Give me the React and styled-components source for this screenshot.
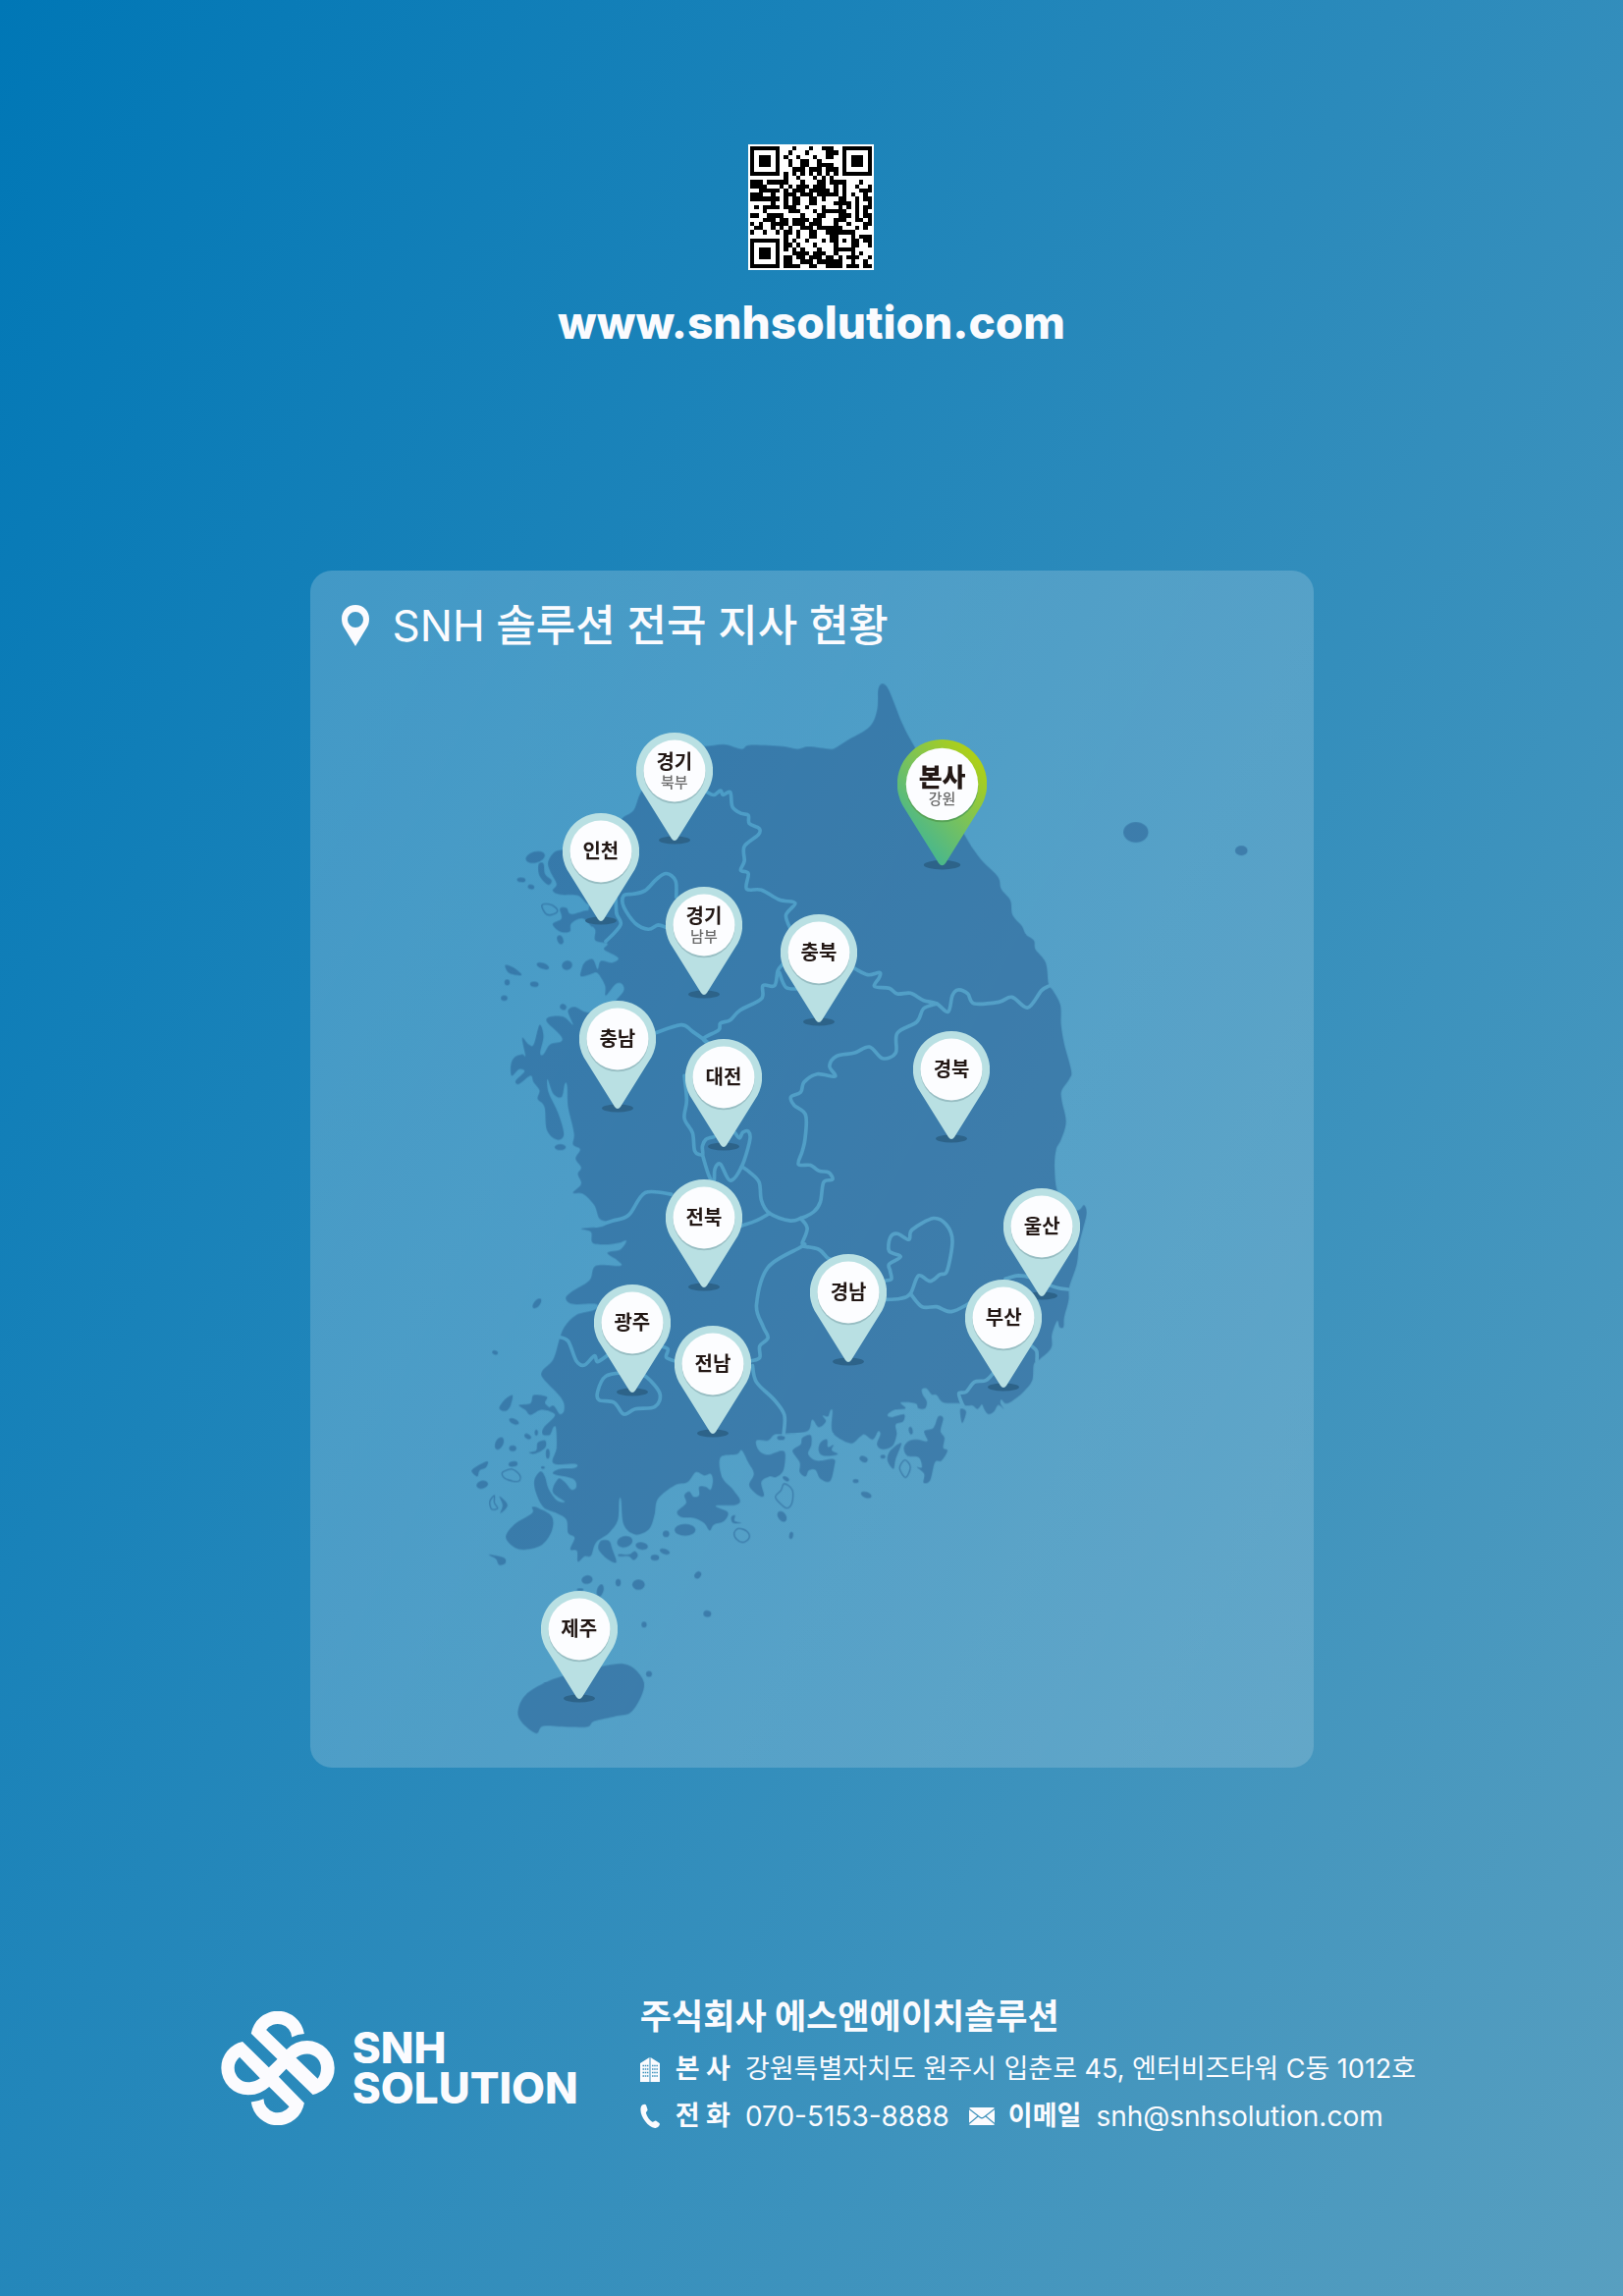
import React from "react";
import styled, { createGlobalStyle } from "styled-components";

const GlobalStyle = createGlobalStyle`
  *, *::before, *::after { box-sizing: border-box; }
  body { margin: 0; }
  h1, h2, p, ul, address { margin: 0; padding: 0; font-style: normal; }
  a { color: inherit; text-decoration: none; }
`;

/* ---------- page ---------- */

const Page = styled.div`
  min-height: 100vh;
  display: flex;
  flex-direction: column;
  align-items: center;
  padding: 147px 0 160px;
  color: #fbfbfe;
  font-family: Inter, "Noto Sans CJK KR", sans-serif;
  background: linear-gradient(117deg, #0077b6 0%, #2b8abb 50%, #589fc0 100%);
`;

const SiteLink = styled.a`
  display: flex;
  flex-direction: column;
  align-items: center;
  gap: 23px;
  font-size: 46px;
  line-height: 60px;
  font-weight: 800;
`;

const QrFrame = styled.svg`
  display: block;
  width: 128px;
  height: 128px;
  background: #fff;
`;

const Panel = styled.section`
  width: 1022px;
  max-width: 100%;
  margin-top: 223px;
  border-radius: 22px;
  background: linear-gradient(117deg, rgba(255, 255, 255, 0.2), rgba(255, 255, 255, 0.16));
`;

const PanelHeader = styled.header`
  display: flex;
  align-items: center;
  gap: 24px;
  height: 99px;
  padding: 13px 32px 0;
`;

const PanelTitle = styled.h2`
  font-size: 44px;
  line-height: 60px;
  font-weight: 500;
`;

const Latin = styled.span`
  font-weight: 400;
`;

const MapCanvas = styled.div`
  position: relative;
  aspect-ratio: 1021 / 1119;
`;

const MapDrawing = styled.svg`
  display: block;
  width: 100%;
  height: 100%;
`;

const PinList = styled.ul`
  list-style: none;
`;

const Pin = styled.li`
  position: absolute;
  left: ${(p) => (p.$x / 1021) * 100}%;
  top: ${(p) => (p.$y / 1119) * 100}%;
  width: ${(p) => (p.$main ? 91 : 78)}px;
  height: ${(p) => (p.$main ? 133 : 114)}px;
  margin-left: ${(p) => (p.$main ? -45 : -39)}px;
  margin-top: ${(p) => (p.$main ? -46 : -39)}px;
  font-family: "Noto Sans CJK KR", sans-serif;
`;

const PinShape = styled.svg`
  display: block;
  width: 100%;
  height: 100%;
`;

const PinLabel = styled.div`
  position: absolute;
  inset: 0 0 auto;
  height: ${(p) => (p.$main ? 91 : 76)}px;
  display: flex;
  flex-direction: column;
  align-items: center;
  justify-content: center;
  color: #231815;
`;

const PinName = styled.strong`
  font-size: ${(p) => (p.$main ? 26 : 20)}px;
  line-height: ${(p) => (p.$main ? 28 : 24)}px;
  font-weight: ${(p) => (p.$main ? 900 : 700)};
`;

const PinArea = styled.span`
  font-size: 15px;
  line-height: 18px;
  font-weight: 500;
  color: #6a6a6a;
`;

/* ---------- footer ---------- */

const Footer = styled.footer`
  align-self: stretch;
  display: flex;
  align-items: center;
  gap: 64px;
  margin-top: 227px;
  padding-left: 13.6%;
`;

const Brand = styled.div`
  display: flex;
  align-items: center;
  gap: 18px;
  width: 363px;
  padding-top: 6px;
`;

const BrandMark = styled.svg`
  flex: none;
  width: 116px;
  height: 116px;
`;

const BrandName = styled.p`
  font-size: 44px;
  line-height: 41px;
  font-weight: 800;
`;

const Company = styled.div`
  display: flex;
  flex-direction: column;
`;

const CompanyName = styled.h2`
  font-size: 35px;
  line-height: 52px;
  font-weight: 700;
  margin-bottom: 4px;
`;

const ContactRow = styled.p`
  display: flex;
  align-items: center;
  height: 48px;
  font-size: 27px;
  line-height: 48px;
  white-space: nowrap;
`;

const ContactIcon = styled.svg`
  flex: none;
  width: ${(p) => p.$width || 20}px;
  height: 26px;
  margin-right: ${(p) => p.$gap || 16}px;
`;

const ContactLabel = styled.strong`
  font-weight: 700;
  margin-right: 15px;
`;

const ContactLink = styled.a`
  font-size: 28px;
`;

const ContactGroup = styled.span`
  display: flex;
  align-items: center;
  margin-right: 20px;
`;

/* ---------- QR code (version 3, level L, mask 0) ---------- */

function encodeQr(text) {
  const size = 29;
  const dataLength = 55;
  const eccLength = 15;
  const bits = [];
  const push = (value, count) => {
    for (let i = count - 1; i >= 0; i--) bits.push((value >> i) & 1);
  };
  push(4, 4);
  push(text.length, 8);
  for (const c of text) push(c.charCodeAt(0), 8);
  push(0, 4);
  for (let pad = 0xec; bits.length < dataLength * 8; pad ^= 0xfd) push(pad, 8);

  const multiply = (a, b) => {
    let r = 0;
    for (let i = 7; i >= 0; i--) {
      r = (r << 1) ^ ((r >> 7) * 0x11d);
      r ^= ((b >> i) & 1) * a;
    }
    return r;
  };
  const generator = new Array(eccLength).fill(0);
  generator[eccLength - 1] = 1;
  for (let i = 0, root = 1; i < eccLength; i++, root = multiply(root, 2)) {
    for (let j = 0; j < eccLength; j++) {
      generator[j] = multiply(generator[j], root) ^ (generator[j + 1] || 0);
    }
  }
  const remainder = new Array(eccLength).fill(0);
  for (let i = 0; i < dataLength; i++) {
    const byte = parseInt(bits.slice(i * 8, i * 8 + 8).join(""), 2);
    const factor = byte ^ remainder.shift();
    remainder.push(0);
    generator.forEach((g, j) => (remainder[j] ^= multiply(g, factor)));
  }
  remainder.forEach((b) => push(b, 8));

  const grid = Array.from({ length: size }, () => new Array(size).fill(null));
  const set = (x, y, on) => {
    if (x >= 0 && y >= 0 && x < size && y < size) grid[y][x] = on ? 1 : 0;
  };
  for (let i = 0; i < size; i++) {
    set(6, i, i % 2 === 0);
    set(i, 6, i % 2 === 0);
  }
  [[3, 3], [size - 4, 3], [3, size - 4]].forEach(([cx, cy]) => {
    for (let dy = -4; dy <= 4; dy++)
      for (let dx = -4; dx <= 4; dx++) {
        const d = Math.max(Math.abs(dx), Math.abs(dy));
        set(cx + dx, cy + dy, d !== 2 && d !== 4);
      }
  });
  for (let dy = -2; dy <= 2; dy++)
    for (let dx = -2; dx <= 2; dx++)
      set(22 + dx, 22 + dy, Math.max(Math.abs(dx), Math.abs(dy)) !== 1);
  const format = 0b111011111000100;
  const f = (i) => (format >> i) & 1;
  for (let i = 0; i < 6; i++) set(8, i, f(i));
  set(8, 7, f(6));
  set(8, 8, f(7));
  set(7, 8, f(8));
  for (let i = 9; i < 15; i++) set(14 - i, 8, f(i));
  for (let i = 0; i < 8; i++) set(size - 1 - i, 8, f(i));
  for (let i = 8; i < 15; i++) set(8, size - 15 + i, f(i));
  set(8, size - 8, 1);

  let index = 0;
  for (let right = size - 1; right >= 1; right -= 2) {
    if (right === 6) right = 5;
    for (let step = 0; step < size; step++) {
      for (let j = 0; j < 2; j++) {
        const x = right - j;
        const y = ((right + 1) & 2) === 0 ? size - 1 - step : step;
        if (grid[y][x] === null) {
          const bit = bits[index++] || 0;
          grid[y][x] = bit ^ ((x + y) % 2 === 0 ? 1 : 0);
        }
      }
    }
  }
  return grid;
}

const qrPath = encodeQr("https://www.snhsolution.com")
  .map((row, y) => row.map((on, x) => (on ? `M${x} ${y}h1v1h-1z` : "")).join(""))
  .join("");

/* ---------- map drawing ---------- */

// Turns "x,y x,y ..." into a smooth path through every point.
function curve(points, closed, dx = 0, dy = 0) {
  const p = points.trim().split(/\s+/).map((s) => {
    const [x, y] = s.split(",").map(Number);
    return [x + dx, y + dy];
  });
  const n = p.length;
  const at = (i) => (closed ? p[(i + n) % n] : p[Math.max(0, Math.min(n - 1, i))]);
  let d = `M${p[0]}`;
  for (let i = 0; i < (closed ? n : n - 1); i++) {
    const [a, b, c, e] = [at(i - 1), at(i), at(i + 1), at(i + 2)];
    const c1 = [b[0] + (c[0] - a[0]) / 6, b[1] + (c[1] - a[1]) / 6];
    const c2 = [c[0] - (e[0] - b[0]) / 6, c[1] - (e[1] - b[1]) / 6];
    d += `C${c1.map(Math.round)} ${c2.map(Math.round)} ${c}`;
  }
  return closed ? d + "Z" : d;
}

const mainland = `580,375 640,290 700,240 770,240 830,234 885,248 910,236 1010,240 1055,248 1090,241 1155,248 1175,242
1215,217 1275,180 1298,130 1302,65 1315,50 1335,70 1375,170 1415,245 1500,390 1565,510 1615,585 1667,638 1677,675 1705,710
1712,755 1740,788 1753,815 1777,832 1782,860 1813,900 1822,965 1835,985 1858,1030 1860,1090 1870,1150 1891,1230 1885,1255
1862,1290 1862,1320 1875,1385 1860,1440 1845,1470 1840,1520 1848,1595 1880,1640 1912,1656 1930,1640 1938,1665 1925,1720 1915,1760
1908,1820 1885,1890 1883,1930 1870,1980 1867,2012 1855,2012 1848,1993 1832,2035 1830,2075 1795,2110 1777,2125 1772,2175
1745,2210 1710,2238 1690,2245 1677,2233 1675,2245 1685,2262 1668,2250 1655,2270 1638,2278 1625,2262 1618,2248 1605,2262
1590,2252 1570,2252 1555,2245 1500,2242 1480,2220 1465,2218 1450,2200 1435,2202 1438,2220 1450,2240 1445,2260 1425,2260
1415,2245 1370,2242 1385,2260 1350,2265 1330,2280 1342,2287 1380,2278 1378,2300 1355,2310 1358,2340 1345,2375 1315,2385
1298,2370 1308,2340 1302,2330 1285,2355 1260,2340 1245,2348 1220,2367 1180,2350 1160,2325 1162,2268 1155,2268 1148,2285
1132,2282 1142,2300 1120,2318 1100,2295 1085,2330 1015,2338 985,2340 965,2358 930,2358 935,2385 955,2400 975,2400 1005,2390
1018,2400 1012,2450 990,2470 970,2468 945,2485 953,2525 935,2525 908,2495 922,2460 905,2425 885,2388 870,2400 820,2410
825,2470 860,2510 880,2540 865,2555 805,2558 843,2578 830,2605 800,2615 787,2633 770,2610 740,2595 700,2592 688,2575
715,2550 710,2525 725,2514 738,2530 755,2525 755,2500 775,2500 790,2508 797,2480 790,2460 770,2465 745,2455 720,2485 680,2495
630,2535 620,2580 610,2615 595,2635 560,2645 525,2615 517,2540 511,2540 507,2600 480,2640 440,2670 425,2710 405,2712
385,2728 382,2695 362,2690 375,2655 355,2640 350,2600 320,2580 280,2562 258,2520 252,2480 270,2453 285,2470 295,2505
320,2540 345,2545 308,2515 325,2475 345,2485 365,2508 380,2500 370,2475 310,2460 330,2445 375,2442 378,2430 310,2428
320,2380 318,2320 310,2318 300,2340 278,2340 280,2320 315,2282 295,2265 310,2252 330,2278 343,2265 335,2230 280,2170
277,2145 310,2110 330,2045 345,2010 380,1975 435,1960 440,1942 370,1942 348,1925 365,1905 420,1870 440,1825 515,1825
505,1808 475,1785 515,1775 533,1748 510,1755 475,1760 430,1755 425,1722 395,1712 460,1705 470,1690 450,1680 435,1640
400,1605 370,1602 395,1575 385,1545 395,1525 378,1498 392,1470 370,1455 373,1420 355,1340 352,1275 345,1270 335,1310
310,1300 292,1255 295,1295 325,1360 342,1425 320,1440 290,1410 283,1340 262,1315 268,1290 250,1265 240,1245 205,1270
195,1260 222,1232 205,1225 183,1245 180,1215 190,1190 215,1180 225,1185 215,1130 235,1150 250,1150 268,1090 280,1125 270,1175
280,1180 300,1150 335,1140 330,1120 290,1080 300,1065 340,1065 370,1090 360,1065 355,1045 375,1035 415,1052 480,1040
505,1010 525,985 520,965 500,965 470,1000 468,970 445,932 425,935 395,942 395,925 405,900 430,890 445,920 455,895 490,900
508,885 465,860 475,842 438,832 438,800 420,775 418,735 440,650 480,520 520,460 555,435`;

const islands = [
  [0, 0, "265,600 280,598 285,630 305,650 293,662 268,635"],
  [0, 0, "295,590 325,558 400,570 440,640 420,720 385,695 330,692 308,680 320,660 300,620"],
  [0, 0, "330,735 350,733 365,752 420,742 430,790 400,765 365,780 360,805 330,805 308,782 335,765"],
  [0, 0, "163,908 190,916 213,938 175,932"],
  [0, 2100, "145,160 160,135 185,120 180,150 165,168"],
  [0, 2100, "205,150 240,145 250,120 290,125 285,145 308,168 270,165 240,180 225,165"],
  [0, 2100, "236,295 258,288 262,265 285,258 285,280 255,298"],
  [0, 2100, "62,355 68,342 108,322 105,340 85,350 78,368"],
  [0, 2100, "145,428 170,455 148,480 155,455"],
  [0, 2100, "165,555 190,515 245,480 245,462 265,465 305,490 305,535 270,580 205,590"],
  [0, 2100, "113,607 158,616 164,632 145,638 135,620"],
  [0, 2100, "448,590 455,565 480,565 490,590 502,630 475,620"],
  [0, 2100, "510,605 540,606 558,596 568,608 556,623 540,612 512,612"],
  [0, 2100, "853,492 865,487 863,503 884,509 858,510"],
  [0, 2100, "202,1085 225,1035 300,990 400,960 470,945 525,940 565,962 587,1010 550,1085 500,1100 435,1115 415,1132 360,1133 280,1130 258,1152 215,1120"],
  [0, 0, "1040,2390 1065,2370 1070,2350 1095,2342 1098,2370 1088,2400 1115,2420 1165,2415 1168,2435 1155,2482 1125,2475 1110,2448 1090,2450 1080,2468 1062,2455 1062,2425"],
  [1080, 1200, "45,1165 65,1155 68,1178 85,1172 80,1188 98,1200 55,1205 40,1190"],
  [1080, 1200, "472,1063 490,1070 478,1105"],
  [1080, 1200, "300,1180 315,1160 340,1155 372,1160 362,1130 390,1120 405,1085 420,1090 412,1130 424,1150 420,1180 433,1190 415,1220 395,1225 380,1280 360,1287 362,1260 340,1240 355,1240 345,1210 310,1205"],
  [1080, 1200, "250,1220 258,1190 292,1166 275,1215 268,1245"],
].map(([dx, dy, points]) => curve(points, true, dx, dy));

// cx, cy, rx, ry, rotation
const islets = [
  [255, 578, 30, 17, -15], [212, 647, 13, 7, 5], [242, 669, 10, 7, 15], [331, 830, 9, 14, -20], [278, 910, 20, 9, 20],
  [352, 908, 16, 14, -20], [169, 960, 8, 9, 0], [252, 966, 13, 8, 5], [160, 1008, 10, 8, 0], [340, 1035, 10, 9, 30],
  [2088, 502, 38, 31, 0], [2410, 558, 19, 15, 0], [260, 1940, 9, 18, 40], [132, 2090, 9, 6, 20], [331, 1463, 17, 9, 0],
  [190, 2300, 16, 8, 25], [232, 2346, 11, 7, 30], [258, 2334, 5, 9, 0], [145, 2367, 12, 20, 25], [186, 2382, 11, 9, 0],
  [293, 2399, 6, 15, 0], [187, 2430, 14, 8, -10], [278, 2441, 6, 4, 0], [93, 2493, 18, 12, -15],
  [528, 2667, 24, 17, -15], [580, 2680, 19, 11, 10], [620, 2716, 13, 9, 0], [650, 2697, 16, 8, 20], [654, 2643, 10, 10, 0],
  [712, 2631, 32, 18, 0], [413, 2783, 17, 13, -10], [453, 2816, 10, 19, 15], [508, 2792, 8, 11, 0], [570, 2798, 19, 16, 0],
  [751, 2769, 9, 12, 40], [780, 2887, 12, 10, 10], [587, 2920, 8, 9, 0], [602, 3071, 9, 9, 0], [392, 2813, 10, 4, 0],
  [1008, 2590, 12, 18, -35], [1036, 2648, 6, 11, 10], [1020, 2475, 11, 6, 35], [1005, 2350, 12, 7, 0],
  [1257, 2415, 13, 9, 25], [1316, 2408, 8, 6, 0], [1233, 2482, 9, 6, 0], [1265, 2524, 17, 9, 20], [1401, 2328, 6, 12, -10],
];

const outlines = [
  "275,725 300,722 322,738 315,750 290,753",
  "155,2455 185,2446 208,2465 205,2482 185,2482 160,2472",
  "130,2526 116,2545 122,2568 140,2565 130,2548",
  "1015,2490 1040,2510 1038,2550 1020,2564 988,2532 1005,2510",
  "862,2640 875,2627 900,2635 908,2655 890,2669 870,2660",
  "1383,2418 1400,2440 1385,2471 1367,2442",
].map((points) => curve(points, true));

const borders = [
  "780,380 800,388 820,375 828,388 850,380 857,425 885,445 905,450 908,475 938,490 935,510 893,545 893,590 882,618 905,628 900,675 945,678 1000,708 1048,718 1020,755 1035,800",
  "685,700 683,650 655,628 625,645 590,680 555,690 525,695 525,730 560,780 600,798 630,785 660,795",
  "500,700 503,750 515,785 470,835",
  "1010,905 995,925 985,970 950,970 945,1010 880,1045 850,1075 820,1085 815,1105 770,1130 780,1145",
  "1000,930 1020,975 1060,980",
  "620,1115 700,1090 735,1110 790,1150",
  "1230,918 1270,937 1305,930 1305,945 1290,972 1335,978 1360,995 1400,993 1440,1015 1480,1025 1515,1050 1528,1000 1545,983 1575,995 1595,1025 1670,1020 1710,1005 1758,1037 1800,985 1825,970",
  "1480,1025 1440,1040 1420,1080 1360,1115 1355,1175 1315,1192 1275,1157 1230,1175 1175,1185 1153,1215 1170,1247 1115,1240 1075,1265 1065,1295 1035,1310 1045,1335 1080,1365 1078,1440 1070,1475 1058,1515 1095,1518 1120,1535 1150,1540 1162,1562 1135,1570 1125,1630 1105,1660 1065,1680 1030,1687 970,1665 945,1625 938,1570 910,1540 885,1522",
  "710,1245 717,1320 710,1375 735,1420 742,1475 765,1485 765,1460 775,1440 800,1432",
  "765,1485 785,1550 800,1570 803,1530 820,1515 850,1565 885,1522 910,1440 905,1415 888,1418 878,1435 865,1420",
  "885,1703 930,1687 970,1665",
  "440,1703 490,1688 540,1670 590,1602 670,1607",
  "1065,1680 1085,1710 1070,1755 1070,1765 965,1830 930,1945 950,2010 965,2045 940,2070 940,2105 915,2115",
  "918,2130 930,2180 985,2235 1015,2280 1013,2340",
  "1070,1765 1120,1775 1150,1803 1180,1805",
  "325,2042 355,2055 380,2115 405,2128 435,2100 445,2118 480,2095",
  "635,2070 660,2080 655,2105 690,2118",
  "530,2150 470,2162 445,2210 450,2235 495,2242 525,2278 560,2262 620,2255 635,2215 595,2165 560,2150",
  "1325,1870 1342,1865 1338,1840 1335,1820 1370,1797 1335,1780 1338,1740 1360,1727 1395,1745 1405,1715 1470,1680 1510,1700 1528,1750 1512,1840 1490,1852 1460,1872 1425,1855 1400,1910 1370,1925 1325,1928",
  "1400,1910 1435,1950 1480,1950 1525,1965 1580,1940",
  "1690,1865 1730,1855 1770,1862 1840,1890 1882,1897",
  "1770,2070 1785,2085 1786,2115",
  "1655,2150 1630,2175 1595,2180 1570,2210 1548,2215 1560,2252",
].map((points) => curve(points, false));

const KoreaMap = () => (
  <MapDrawing viewBox="-432 0 3063 3357" role="img" aria-label="대한민국 지도">
    <mask id="province-lines" maskUnits="userSpaceOnUse" x="-432" y="0" width="3063" height="3357">
      <rect x="-432" width="3063" height="3357" fill="#fff" />
      <g fill="none" stroke="#000" strokeWidth="11" strokeLinecap="round" strokeLinejoin="round">
        {borders.map((d) => <path key={d} d={d} />)}
      </g>
    </mask>
    <g opacity="0.45" mask="url(#province-lines)" fill="#205289">
      <path d={curve(mainland, true)} />
      {islands.map((d) => <path key={d} d={d} />)}
      {islets.map(([cx, cy, rx, ry, turn]) => (
        <ellipse key={`${cx}-${cy}`} cx={cx} cy={cy} rx={rx} ry={ry} transform={`rotate(${turn} ${cx} ${cy})`} />
      ))}
      <g fill="none" stroke="#205289" strokeWidth="4">
        {outlines.map((d) => <path key={d} d={d} />)}
      </g>
    </g>
  </MapDrawing>
);

/* ---------- branches ---------- */

const branches = [
  { name: "경기", area: "북부", x: 371, y: 105 },
  { name: "본사", area: "강원", x: 643, y: 119, main: true },
  { name: "인천", x: 296, y: 187 },
  { name: "경기", area: "남부", x: 401, y: 262 },
  { name: "충북", x: 518, y: 290 },
  { name: "충남", x: 313, y: 378 },
  { name: "대전", x: 421, y: 417 },
  { name: "경북", x: 653, y: 409 },
  { name: "전북", x: 401, y: 559 },
  { name: "울산", x: 745, y: 568 },
  { name: "경남", x: 548, y: 635 },
  { name: "부산", x: 706, y: 661 },
  { name: "광주", x: 328, y: 666 },
  { name: "전남", x: 410, y: 708 },
  { name: "제주", x: 274, y: 978 },
];

const BranchPin = ({ name, area, x, y, main }) => (
  <Pin $x={x} $y={y} $main={main}>
    <PinShape viewBox="0 0 78 114" aria-hidden="true">
      {main && (
        <linearGradient id="main-pin" x1="0.2" y1="0.85" x2="0.8" y2="0.1">
          <stop offset="0" stopColor="#43b692" />
          <stop offset="0.5" stopColor="#78c25c" />
          <stop offset="1" stopColor="#accf1a" />
        </linearGradient>
      )}
      <ellipse cx="39" cy="109.5" rx="16" ry="4" fill="#2d6389" />
      <path
        d="M39 0A39 39 0 0 1 73.5 57.5L42 108Q39 112 36 108L4.500 57.5A39 39 0 0 1 39 0Z"
        fill={main ? "url(#main-pin)" : "#b9e0e3"}
      />
      <circle cx="39" cy="40.800" r="31.5" fill={main ? "#57a357" : "#98bec3"} />
      <circle cx="39" cy="39" r="31.5" fill="#fcfdff" />
    </PinShape>
    <PinLabel $main={main}>
      <PinName $main={main}>{name}</PinName>
      {area && <PinArea>{area}</PinArea>}
    </PinLabel>
  </Pin>
);

/* ---------- icons ---------- */

const MarkerIcon = styled.svg`
  flex: none;
  width: 28px;
  height: 42px;
`;

const BuildingIcon = () => (
  <ContactIcon viewBox="0 0 20 26" aria-hidden="true">
    <path d="M0 26V7L9.500 1V26ZM10.500 26V1L20 7V26Z" fill="currentColor" />
    <path
      d="M2.500 9.500h6M2.500 13h6M2.500 16.500h6M2.500 20h6M12 9.500h6M12 13h6M12 16.500h6M12 20h6"
      stroke="#3c92bd"
      strokeWidth="1.700"
      strokeDasharray="1.500 0.700"
    />
  </ContactIcon>
);

const PhoneIcon = () => (
  <ContactIcon viewBox="0 0 20 26" aria-hidden="true">
    <path
      d="M1 3C2 1 5 0 6 1.500L7.500 6C8 7.500 5.500 8.500 6 10C7 13.500 9.500 17 12 18.500C13.500 19.500 14.500 17 16 17.500L19.500 20C21 21.500 18 25 15 25C7 24-2 10 1 3Z"
      fill="currentColor"
    />
  </ContactIcon>
);

const MailIcon = () => (
  <ContactIcon viewBox="0 0 26 26" $width={26} $gap={14} aria-hidden="true">
    <rect y="4" width="26" height="18" rx="1.500" fill="currentColor" />
    <path d="M0 5.500L11 14Q13 15.500 15 14L26 5.500M0 20.500L9 13M26 20.500L17 13" fill="none" stroke="#4294bd" strokeWidth="1.300" />
  </ContactIcon>
);

export default function App() {
  return (
    <>
      <GlobalStyle />
      <Page>
        <SiteLink href="https://www.snhsolution.com">
          <QrFrame viewBox="-0.5 -0.5 30 30" shapeRendering="crispEdges" role="img" aria-label="QR">
            <path d={qrPath} fill="#000" />
          </QrFrame>
          www.snhsolution.com
        </SiteLink>

        <Panel aria-labelledby="branches-title">
          <PanelHeader>
            <MarkerIcon viewBox="0 0 28 42" aria-hidden="true">
              <path
                d="M14 0C6 0 0 6 0 14C0 18 1 21 3 24L14 42L25 24C27 21 28 18 28 14C28 6 22 0 14 0ZM14 7A8 8 0 0 1 14 23A8 8 0 0 1 14 7Z"
                fill="currentColor"
                fillRule="evenodd"
              />
            </MarkerIcon>
            <PanelTitle id="branches-title">
              <Latin>SNH</Latin> 솔루션 전국 지사 현황
            </PanelTitle>
          </PanelHeader>
          <MapCanvas>
            <KoreaMap />
            <PinList>
              {branches.map((b) => <BranchPin key={b.name + (b.area || "")} {...b} />)}
            </PinList>
          </MapCanvas>
        </Panel>

        <Footer>
          <Brand>
            <BrandMark viewBox="46 54 347 347" aria-hidden="true">
              <path
                d="M300 123A82 82 0 0 0 138 122L218 200L192 225L112 147A82 82 0 0 0 47 227A82 82 0 0 0 129 309Q165 309 193 284L254 345A43 43 0 0 1 176 321Q158 329 138 331A82 82 0 0 0 300 334L222 254L245 230L326 308A82 82 0 0 0 392 227A83 83 0 0 0 309 144Q272 144 246 171L184 111A43 43 0 0 1 262 133Q280 124 300 123ZM275 196Q290 184 309 184A43 43 0 0 1 351 227Q351 246 341 260ZM103 194L165 258Q150 270 129 270A43 43 0 0 1 87 227Q87 208 103 194Z"
                fill="currentColor"
                fillRule="evenodd"
              />
            </BrandMark>
            <BrandName>
              SNH
              <br />
              SOLUTION
            </BrandName>
          </Brand>
          <Company>
            <CompanyName>주식회사 에스앤에이치솔루션</CompanyName>
            <address>
              <ContactRow>
                <BuildingIcon />
                <ContactLabel>본 사</ContactLabel>
                강원특별자치도 원주시 입춘로 45, 엔터비즈타워 C동 1012호
              </ContactRow>
              <ContactRow>
                <ContactGroup>
                  <PhoneIcon />
                  <ContactLabel>전 화</ContactLabel>
                  <ContactLink href="tel:070-5153-8888">070-5153-8888</ContactLink>
                </ContactGroup>
                <MailIcon />
                <ContactLabel>이메일</ContactLabel>
                <ContactLink href="mailto:snh@snhsolution.com">snh@snhsolution.com</ContactLink>
              </ContactRow>
            </address>
          </Company>
        </Footer>
      </Page>
    </>
  );
}
